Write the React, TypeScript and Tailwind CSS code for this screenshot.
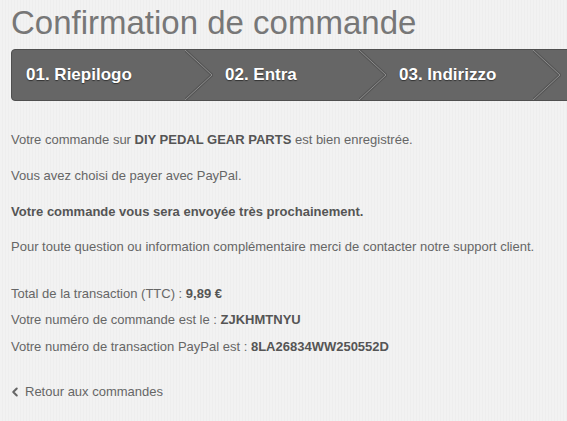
import { ChevronLeft } from 'lucide-react'

const steps = ['01. Riepilogo', '02. Entra', '03. Indirizzo', '']

function Chevron() {
  return (
    <svg className="absolute right-0 top-0 h-full w-[28px]" viewBox="0 0 28 52" preserveAspectRatio="none">
      <polyline points="0,0 27,26 0,52" fill="none" stroke="#555555" strokeWidth="3" />
      <polyline points="0,0 27,26 0,52" fill="none" stroke="#8f8f8f" strokeWidth="1" />
    </svg>
  )
}

export default function App() {
  return (
    <div
      className="h-[421px] w-[567px] overflow-hidden bg-[#f1f1f1] bg-[repeating-linear-gradient(90deg,#f2f2f2_0px,#f2f2f2_2px,#eeeeee_2px,#eeeeee_3px)] text-[13px] text-[#666666]"
      style={{ fontFamily: '"Liberation Sans", Arial, sans-serif' }}
    >
      <div className="px-[11px] pt-[4px]">
        <h1 className="text-[33px] font-normal leading-[38px] text-[#777777]">Confirmation de commande</h1>

        <div className="mt-[7px] flex h-[52px] w-[760px] overflow-hidden rounded-l-[4px] border border-[#4f4f4f] bg-[#666666]">
          {steps.map((step, i) => (
            <div
              key={i}
              className={`relative flex h-full shrink-0 items-center ${i === 0 ? 'w-[201px] pl-[14px]' : 'w-[174px] pl-[12px]'}`}
            >
              <span className="text-[17px] font-bold text-white [text-shadow:0_1px_1px_#333]">{step}</span>
              <Chevron />
            </div>
          ))}
        </div>

        <div className="mt-[30px] leading-[18px]">
          <p>
            Votre commande sur <b className="text-[#555555]">DIY PEDAL GEAR PARTS</b> est bien enregistrée.
          </p>
          <p className="mt-[18px]">Vous avez choisi de payer avec PayPal.</p>
          <p className="mt-[18px] font-bold text-[#555555]">Votre commande vous sera envoyée très prochainement.</p>
          <p className="mt-[17px]">Pour toute question ou information complémentaire merci de contacter notre support client.</p>

          <p className="mt-[29px]">
            Total de la transaction (TTC) : <b className="text-[#555555]">9,89 €</b>
          </p>
          <p className="mt-[8px]">
            Votre numéro de commande est le : <b className="text-[#555555]">ZJKHMTNYU</b>
          </p>
          <p className="mt-[9px]">
            Votre numéro de transaction PayPal est : <b className="text-[#555555]">8LA26834WW250552D</b>
          </p>

          <a href="#" className="mt-[27px] flex items-center gap-[3px] text-[#666666]">
            <ChevronLeft size={14} strokeWidth={3.5} className="-ml-[3px]" />
            Retour aux commandes
          </a>
        </div>
      </div>
    </div>
  )
}
